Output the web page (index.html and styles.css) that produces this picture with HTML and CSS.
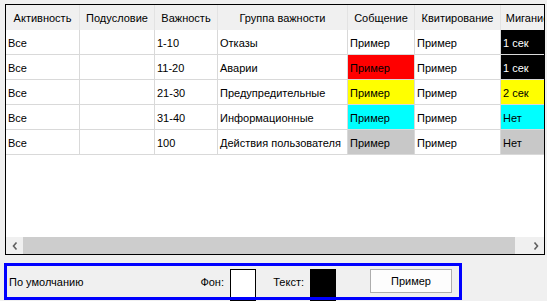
FILE: index.html
```html
<!DOCTYPE html>
<html lang="ru">
<head>
<meta charset="utf-8">
<link rel="stylesheet" href="styles.css">
</head>
<body>
<div class="frame">
  <div class="viewport">
    <div class="grid">
      <div class="hd">Активность</div>
      <div class="hd">Подусловие</div>
      <div class="hd">Важность</div>
      <div class="hd">Группа важности</div>
      <div class="hd">Собщение</div>
      <div class="hd">Квитирование</div>
      <div class="hd">Мигание</div>

      <div class="c">Все</div><div class="c"></div><div class="c">1-10</div><div class="c">Отказы</div><div class="c">Пример</div><div class="c">Пример</div><div class="c black">1 сек</div>
      <div class="c">Все</div><div class="c"></div><div class="c">11-20</div><div class="c">Аварии</div><div class="c red">Пример</div><div class="c">Пример</div><div class="c black">1 сек</div>
      <div class="c">Все</div><div class="c"></div><div class="c">21-30</div><div class="c">Предупредительные</div><div class="c yellow">Пример</div><div class="c">Пример</div><div class="c yellow">2 сек</div>
      <div class="c">Все</div><div class="c"></div><div class="c">31-40</div><div class="c">Информационные</div><div class="c cyan">Пример</div><div class="c">Пример</div><div class="c cyan">Нет</div>
      <div class="c">Все</div><div class="c"></div><div class="c">100</div><div class="c">Действия пользователя</div><div class="c gray">Пример</div><div class="c">Пример</div><div class="c gray">Нет</div>
    </div>
  </div>
  <div class="hscroll">
    <div class="sb-btn"><svg width="6" height="8" viewBox="0 0 6 8"><path d="M4.5 0.5 L1.5 4 L4.5 7.5" fill="none" stroke="#606060" stroke-width="1.6"/></svg></div>
    <div class="sb-thumb"></div>
    <div class="sb-track"></div>
    <div class="sb-btn"><svg width="6" height="8" viewBox="0 0 6 8"><path d="M1.5 0.5 L4.5 4 L1.5 7.5" fill="none" stroke="#606060" stroke-width="1.6"/></svg></div>
  </div>
</div>

<div class="settings">
  <div class="row">
    <div class="name">По умолчанию</div>
    <div class="flabel flabel-bg">Фон:</div>
    <div class="swatch white"></div>
    <div class="flabel flabel-fg">Текст:</div>
    <div class="swatch blackswatch"></div>
    <div class="btn">Пример</div>
  </div>
  <div class="highlight"></div>
</div>
</body>
</html>
```

FILE: styles.css
```css
html, body {
  margin: 0;
  padding: 0;
}
body {
  background: #f0f0f0;
  font-family: "Liberation Sans", Arial, sans-serif;
  font-size: 11px;
  color: #000;
  width: 547px;
  height: 301px;
  overflow: hidden;
  padding-top: 4px;
  box-sizing: border-box;
}
.frame {
  margin-left: 5px;
  width: 540px;
  height: 251px;
  border: 1px solid #000;
  box-sizing: border-box;
  display: flex;
  flex-direction: column;
  background: #fff;
}
.viewport {
  flex: 1;
  overflow: hidden;
  background: #fff;
}
.grid {
  display: grid;
  grid-template-columns: 74px 75px 63px 130px 67px 86px 54px;
  grid-auto-rows: 25px;
  width: 549px;
}
.hd {
  background: #f0f0f0;
  border-right: 1px solid #e3e3e3;
  display: flex;
  align-items: center;
  justify-content: center;
  white-space: nowrap;
  overflow: visible;
  padding-top: 1px;
}
.c {
  border-right: 1px solid #d9d9d9;
  border-bottom: 1px solid #d9d9d9;
  box-sizing: border-box;
  display: flex;
  align-items: center;
  padding-left: 2px;
  padding-top: 1px;
  white-space: nowrap;
  overflow: hidden;
}
.black { background: #000; color: #fff; }
.red { background: #ff0000; }
.yellow { background: #ffff00; }
.cyan { background: #00ffff; }
.gray { background: #c8c8c8; }

.hscroll {
  height: 17px;
  display: flex;
  background: #f0f0f0;
}
.sb-btn {
  width: 17px;
  display: flex;
  align-items: center;
  justify-content: center;
}
.sb-thumb {
  width: 492px;
  background: #cdcdcd;
}
.sb-track {
  flex: 1;
}

.settings {
  position: relative;
  margin-top: 14px;
}
.row {
  display: flex;
  align-items: flex-start;
  height: 32px;
}
.name {
  width: 186px;
  padding-left: 9px;
  height: 26px;
  line-height: 26px;
}
.flabel {
  height: 26px;
  line-height: 26px;
  text-align: right;
  padding-right: 6px;
  box-sizing: border-box;
}
.flabel-bg { width: 35px; }
.flabel-fg { width: 54px; }
.swatch {
  width: 26px;
  height: 32px;
  box-sizing: border-box;
  border: 1px solid #000;
}
.white { background: #fff; }
.blackswatch { background: #000; }
.btn {
  margin-left: 34px;
  width: 82px;
  height: 24px;
  box-sizing: border-box;
  border: 1px solid #adadad;
  background: #fdfdfd;
  display: flex;
  align-items: center;
  justify-content: center;
}
.highlight {
  position: absolute;
  left: 4px;
  top: -6px;
  width: 458px;
  height: 37px;
  border: 3px solid #0000ff;
  box-sizing: border-box;
}
```
